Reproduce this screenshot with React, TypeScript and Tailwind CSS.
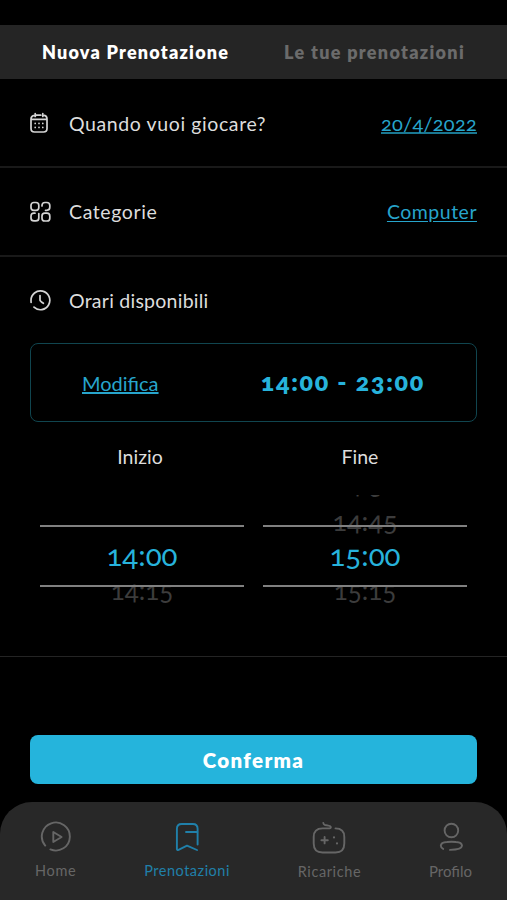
import type { ReactNode } from 'react'

type IconProps = { children: ReactNode }

function RowIcon({ children }: IconProps) {
  return (
    <svg viewBox="0 0 22 22" className="w-[22px] h-[22px] shrink-0" fill="none" stroke="#d4d4d4" strokeWidth="1.7" strokeLinecap="round" strokeLinejoin="round">
      {children}
    </svg>
  )
}

function NavIcon({ children }: IconProps) {
  return (
    <svg viewBox="0 0 34 34" className="w-[34px] h-[34px] -mx-2" fill="none" stroke="currentColor" strokeWidth="1.9" strokeLinecap="round" strokeLinejoin="round">
      {children}
    </svg>
  )
}

const NAV = [
  {
    label: 'Home',
    style: 'text-[#666666] text-[14.5px] tracking-[0.7px]',
    icon: (
      <>
        <path d="M6.2 25.6 A14 14 0 1 1 11.4 29.4" />
        <path d="M14.3 12 V22 L22.6 17 Z" />
      </>
    ),
  },
  {
    label: 'Prenotazioni',
    style: 'text-[#2080aa] text-[14.5px] tracking-[0.5px]',
    icon: (
      <>
        <path d="M27.6 24.5 V8.8 Q27.6 4 22.8 4 H11.7 Q6.9 4 6.9 8.8 V29 Q6.9 30.4 8.5 29.8 L17 25.7 L27 30" />
        <path d="M16 12 H27.3" />
      </>
    ),
  },
  {
    label: 'Ricariche',
    style: 'text-[#666666] text-[14.5px] tracking-[0.6px] pt-px',
    icon: (
      <>
        <path d="M23.5 7.4 C29.5 7.4 32.3 10.5 32.3 16 V22.5 C32.3 28.5 29.5 31.5 23.5 31.5 H10.5 C4.5 31.5 1.7 28.5 1.7 22.5 V16 C1.7 10.5 4.5 7.4 10.5 7.4 H17.5 Q19 7.2 18.8 6 Q18.6 4.8 16.5 4.6 L13 4 Q11.5 3.6 11.3 2" />
        <path d="M12.6 16 V22.4 M9.4 19.2 H15.8" />
        <path d="M22 16.4 V16.5 M25 22.4 V22.5" strokeWidth="2.2" />
      </>
    ),
  },
  {
    label: 'Profilo',
    style: 'text-[#666666] text-[15px]',
    icon: (
      <>
        <circle cx="17.4" cy="10.5" r="6.8" />
        <path d="M9.2 28.9 Q6.8 27.8 6.8 25.6 Q7 22.4 13 22 Q17.5 21.4 22 22 Q27.8 22.4 28 25.6 Q27.8 29.6 16 29.9" />
      </>
    ),
  },
]

type RowProps = { icon: ReactNode; label: string; labelClass: string; children?: ReactNode }

function Row({ icon, label, labelClass, children }: RowProps) {
  return (
    <div className="flex h-[87px] items-center px-[30px]">
      <RowIcon>{icon}</RowIcon>
      <span className={`ml-[17px] grow text-[19.5px] ${labelClass}`}>{label}</span>
      {children}
    </div>
  )
}

type WheelProps = { before?: string[]; value: string; after: string }

function Wheel({ before = ['', ''], value, after }: WheelProps) {
  return (
    <div className="relative h-[122px] w-[204px] overflow-hidden text-center">
      <div className="-mt-[29px] h-[36px] text-[26px] leading-[37px] text-[#3c3c3c]">{before[0]}</div>
      <div className="h-[33px] text-[27px] leading-[37px] text-[#3c3c3c]">{before[1]}</div>
      <div className="h-[37px] text-[29.5px] leading-[40px] text-[#27b3dc]">{value}</div>
      <div className="h-[34px] text-[26px] leading-[37px] text-[#3c3c3c]">{after}</div>
      <div className="absolute inset-x-0 top-[30px] h-[62px] border-y-2 border-[#808080]" />
    </div>
  )
}

export default function App() {
  return (
    <div className="flex h-[900px] w-[507px] flex-col overflow-hidden bg-black pt-[25px] font-['Lato','Open_Sans',sans-serif] text-[#dddddd] oldstyle-nums">
      <header className="flex h-[54px] shrink-0 items-center justify-between bg-[#252525] px-[42px] pt-px text-[18px] font-extrabold">
        <span className="tracking-[1.22px] text-white">Nuova Prenotazione</span>
        <span className="tracking-[1.3px] text-[#6b6b6b]">Le tue prenotazioni</span>
      </header>

      <section className="border-b-2 border-[#191919]">
        <Row
          label="Quando vuoi giocare?"
          labelClass="tracking-[0.6px] pt-0.5"
          icon={
            <>
              <path d="M6.2 3.3 H4.5 Q1 3.8 1 7 V16.5 Q1 20 4.5 20 H13.5 Q17 20 17 16.5 V7 Q17 3.8 14.4 3.3 M5.2 1.5 V4.5 M12.8 1.5 V4.5 M5.5 3.2 H10.8 M1.5 7.4 H16.5" />
              <path d="M5.2 11.4 V11.5 M9 11.4 V11.5 M12.8 11.4 V11.5 M5.2 15.4 V15.5 M9 15.4 V15.5 M12.8 15.4 V15.5" />
            </>
          }
        >
          <span className="mt-0.5 border-b-2 border-[#1a7892] text-[20px] leading-[18px] tracking-[0.25px] text-[#27a5cc]">20/4/2022</span>
        </Row>
      </section>

      <section className="border-b-2 border-[#191919]">
        <Row
          label="Categorie"
          labelClass="tracking-[0.6px]"
          icon={
            <>
              <rect x="1" y="1.5" width="7.8" height="7.8" rx="2.8" />
              <path d="M12 5 V4.5 Q12 1.5 15 1.5 H16.8 Q19.8 1.5 19.8 4.5 V6.3 Q19.8 9.3 16.8 9.3 H15.5" />
              <path d="M5 12.2 H4 Q1 12.2 1 15.2 V16.9 Q1 19.9 4 19.9 H5.8 Q8.8 19.9 8.8 16.9 V12.5" />
              <rect x="12" y="12.2" width="7.8" height="7.8" rx="2.8" />
            </>
          }
        >
          <span className="text-[19.5px] tracking-[0.5px] text-[#27a5cc] underline underline-offset-2">Computer</span>
        </Row>
      </section>

      <section className="h-[400px] shrink-0 border-b border-[#242424]">
        <Row
          label="Orari disponibili"
          labelClass="tracking-[0.25px]"
          icon={
            <>
              <path d="M1 10.5 A9.4 9.4 0 1 1 4 17.2 M1 10.5 L1.1 12.5" />
              <path d="M10 5.5 V10 Q10 11.2 13.4 13.3" />
            </>
          }
        />
        <div className="mx-[30px] -mt-px flex h-[79px] items-center rounded-lg border border-[#10454f] pl-[51px] pr-[51px]">
          <span className="text-[20px] text-[#27a5cc] underline underline-offset-1">Modifica</span>
          <span className="-mt-0.5 ml-auto text-[25px] font-extrabold tracking-[1.7px] text-[#27b3dc]">14:00 - 23:00</span>
        </div>
        <div className="flex h-[73px] px-[30px] pt-[23px] text-[19.5px] leading-[24px]">
          <span className="w-[220px] text-center">Inizio</span>
          <span className="w-[220px] text-center">Fine</span>
        </div>
        <div className="flex justify-between px-10">
          <Wheel value="14:00" after="14:15" />
          <Wheel before={['14:30', '14:45']} value="15:00" after="15:15" />
        </div>
      </section>

      <button className="mx-[30px] mt-[78px] h-[49px] shrink-0 rounded-lg bg-[#25b4dc] pt-px text-[20.5px] font-extrabold tracking-[1.35px] text-white">
        Conferma
      </button>

      <nav className="mt-[18px] flex h-[98px] shrink-0 items-start justify-between rounded-t-[32px] bg-[#282828] px-[35px] pt-[18px]">
        {NAV.map((item) => (
          <div key={item.label} className={`flex flex-col items-center ${item.style}`}>
            <NavIcon>{item.icon}</NavIcon>
            <span className="mt-[7px] leading-[20px]">{item.label}</span>
          </div>
        ))}
      </nav>
    </div>
  )
}
